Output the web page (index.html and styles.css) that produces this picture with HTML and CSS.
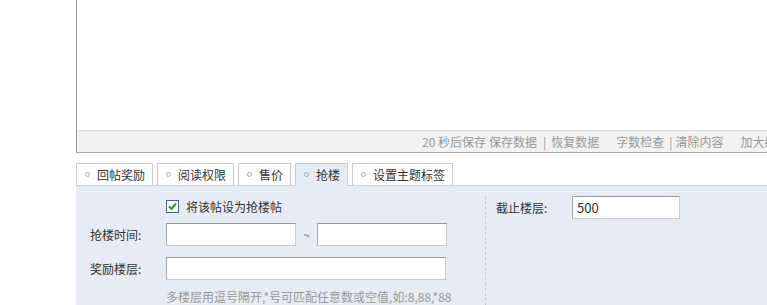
FILE: index.html
```html
<!DOCTYPE html>
<html lang="zh-CN">
<head>
    <meta charset="UTF-8">
    <title>发表帖子</title>
    <link rel="stylesheet" href="styles.css">
</head>
<body>
    <div class="post-wrap">
        <div class="editor">
            <div class="editor-body"></div>
            <div class="editor-bar">
                <span class="bar-item">20 秒后保存</span>
                <span class="bar-item">保存数据</span>
                <span class="bar-sep wide">|</span>
                <span class="bar-item">恢复数据</span>
                <span class="bar-item bar-gap">字数检查</span>
                <span class="bar-sep">|</span>
                <span class="bar-item">清除内容</span>
                <span class="bar-item bar-gap">加大编辑框</span>
            </div>
        </div>

        <ul class="tabs">
            <li class="tab">回帖奖励</li>
            <li class="tab">阅读权限</li>
            <li class="tab">售价</li>
            <li class="tab active">抢楼</li>
            <li class="tab">设置主题标签</li>
        </ul>

        <div class="panel">
            <div class="panel-left">
                <div class="row row-check">
                    <span class="row-label"></span>
                    <span class="checkbox checked">
                        <svg width="11" height="11" viewBox="0 0 11 11"><path d="M2 5.5 L4.5 8 L9 2.5" fill="none" stroke="#2e9a2e" stroke-width="2"/></svg>
                    </span>
                    <span class="check-text">将该帖设为抢楼帖</span>
                </div>
                <div class="row row-time">
                    <span class="row-label">抢楼时间:</span>
                    <input class="text-input w130" type="text">
                    <span class="tilde">~</span>
                    <input class="text-input w130" type="text">
                </div>
                <div class="row row-floor">
                    <span class="row-label">奖励楼层:</span>
                    <input class="text-input w280" type="text">
                </div>
                <div class="row row-hint">
                    <span class="row-label"></span>
                    <span class="hint">多楼层用逗号隔开,*号可匹配任意数或空值,如:8,88,*88</span>
                </div>
            </div>
            <div class="panel-right">
                <div class="row">
                    <span class="row-label">截止楼层:</span>
                    <input class="text-input w108" type="text" value="500">
                </div>
            </div>
        </div>
    </div>
</body>
</html>
```

FILE: styles.css
```css
body {
    margin: 0;
    padding: 0;
    background-color: #fff;
    font-family: "Noto Sans CJK SC", "Liberation Sans", sans-serif;
    font-size: 12px;
    color: #333;
    overflow: hidden;
}

.post-wrap {
    margin-left: 76px;
    width: 760px;
}

/* editor */
.editor {
    border-left: 1px solid #999;
}

.editor-body {
    height: 130px;
    background-color: #fff;
}

.editor-bar {
    display: flex;
    align-items: center;
    height: 21px;
    padding-left: 345px;
    background-color: #f2f2f2;
    border-top: 1px solid #ddd;
    border-bottom: 1px solid #aaa;
    color: #999;
    white-space: nowrap;
}

.bar-item {
    margin-right: 3px;
}

.bar-sep {
    margin: 0 3px 0 2px;
}

.bar-sep.wide {
    margin: 0 5px 0 3px;
}

.bar-gap {
    margin-left: 14px;
}

/* tabs */
.tabs {
    display: flex;
    list-style: none;
    margin: 10px 0 0;
    padding: 0;
}

.tab {
    display: flex;
    align-items: center;
    height: 21px;
    padding: 0 7px 0 8px;
    margin-right: 4px;
    margin-bottom: -1px;
    background-color: #fff;
    border: 1px solid #ccc;
    line-height: 21px;
}

.tab::before {
    content: "";
    width: 3px;
    height: 3px;
    margin-right: 7px;
    border: 1px solid #aaa;
    border-radius: 50%;
}

.tab.active {
    background-color: #e5ecf3;
    border-bottom-color: #e5ecf3;
}

/* panel */
.panel {
    display: flex;
    height: 120px;
    background-color: #e5ecf3;
    border-top: 1px solid #ccc;
}

.panel-left {
    width: 395px;
    padding: 9px 0 0 14px;
}

.panel-right {
    margin-top: 10px;
    padding-left: 10px;
    border-left: 1px dashed #c4c9cf;
    flex: 1;
}

.row {
    display: flex;
    align-items: center;
    min-height: 23px;
}

.row-time {
    margin-top: 5px;
}

.row-floor {
    margin-top: 11px;
}

.row-hint {
    margin-top: 7px;
    min-height: 18px;
}

.row-label {
    width: 76px;
    flex-shrink: 0;
}

.checkbox {
    display: flex;
    align-items: center;
    justify-content: center;
    width: 11px;
    height: 11px;
    border: 1px solid #4a6277;
    background-color: #fff;
}

.check-text {
    margin-left: 7px;
}

.text-input {
    box-sizing: border-box;
    height: 23px;
    padding: 0 4px;
    margin: 0;
    border: 1px solid #ccc;
    border-top-color: #999;
    border-left-color: #aaa;
    background-color: #fff;
    font-family: "Noto Sans CJK SC", "Liberation Sans", sans-serif;
    font-size: 13px;
    color: #333;
    outline: none;
}

.w130 {
    width: 130px;
}

.w280 {
    width: 280px;
}

.w108 {
    width: 108px;
}

.tilde {
    width: 21px;
    text-align: center;
    color: #666;
}

.hint {
    color: #999;
}
```
